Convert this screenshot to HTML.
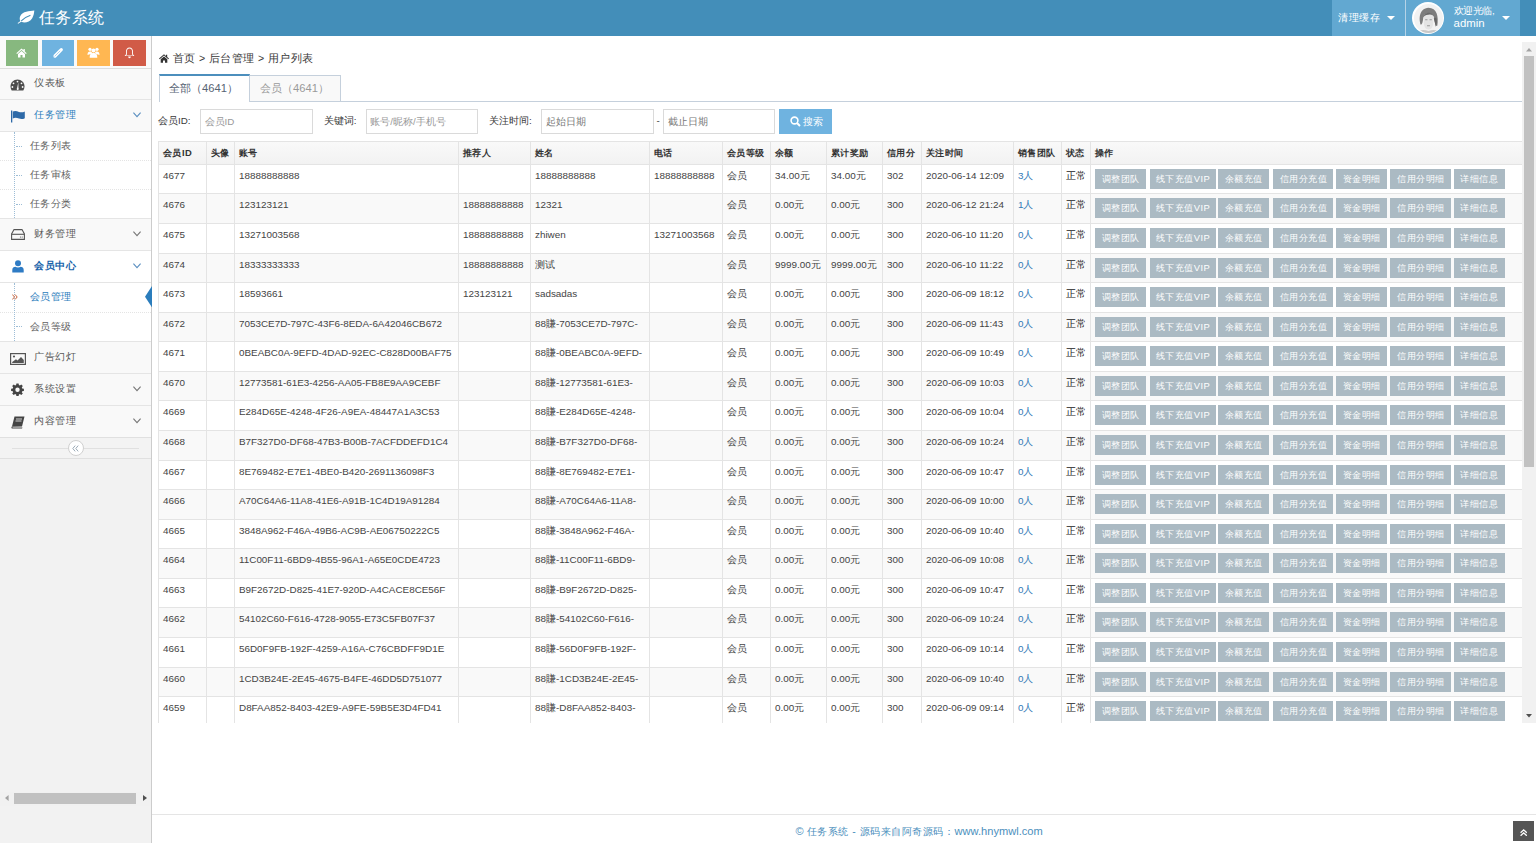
<!DOCTYPE html>
<html><head><meta charset="utf-8"><title>任务系统</title>
<style>
*{box-sizing:border-box;margin:0;padding:0}
html,body{width:1536px;height:843px;overflow:hidden;background:#fff;font-family:"Liberation Sans",sans-serif;color:#393939}
.a{position:absolute}
#hdr{position:absolute;left:0;top:0;width:1536px;height:36px;background:#438eb9}
.brand{position:absolute;left:39px;top:7px;font-size:16.4px;letter-spacing:0.4px;line-height:20px;color:#fff;white-space:nowrap}
.navli{position:absolute;top:0;height:36px;background:#62a8d1}
.wt{position:absolute;color:#fff;white-space:nowrap}
.caret{position:absolute;width:0;height:0;border-left:4.2px solid transparent;border-right:4.2px solid transparent;border-top:4.6px solid #fff}
#side{position:absolute;left:0;top:36px;width:152px;height:807px;background:#f2f2f2;border-right:1px solid #cccccc}
.sc{position:absolute;top:4px;height:25.8px;width:32.4px}
.mi{position:absolute;left:0;width:151px;background:#f9f9f9;border-top:1px solid #e5e5e5}
.mi .t{position:absolute;left:34.6px;font-size:10.4px;line-height:12px;color:#585858;white-space:nowrap}
.sub{position:absolute;left:0;width:151px;background:#fff;border-top:1px solid #e5e5e5}
.si{position:absolute;left:0;width:151px}
.si .t{position:absolute;left:30px;font-size:10.4px;line-height:12px;color:#616161;white-space:nowrap}
.si .dash{position:absolute;left:15px;width:6px;border-top:1px dotted #9dbdd6}
.chev{position:absolute;left:133px;width:8px;height:6px}
.bg{position:absolute;left:0;width:151px}
.ln{position:absolute;left:0;width:151px;height:1px;background:#e5e5e5}
.dl{position:absolute;left:0;width:151px;border-top:1px dotted #e4e4e4}
.dash{position:absolute;left:16px;width:6px;border-top:1px dotted #9dbdd6}
.mt{position:absolute;left:34px;font-size:10.4px;letter-spacing:0.7px;line-height:12px;color:#585858;white-space:nowrap}
.st{position:absolute;left:29.8px;font-size:10.4px;letter-spacing:0.5px;line-height:12px;color:#616161;white-space:nowrap}
.hl{position:absolute;height:1px;background:#e4e4e4}
.vl{position:absolute;width:1px;background:#e4e4e4}
.thead{position:absolute;background:linear-gradient(#f9f9f9,#f2f2f2)}
.tr{position:absolute}
.th{position:absolute;font-size:9.4px;letter-spacing:0.45px;line-height:12px;font-weight:bold;color:#333;white-space:nowrap}
.td{position:absolute;font-size:9.9px;line-height:12px;color:#444;white-space:nowrap}
.td.blue{color:#337ab7}
.td.dark{color:#222}
.btn{position:absolute;height:20.4px;background:#abbac3;color:#fff;font-size:9.4px;letter-spacing:0.5px;text-indent:0.5px;line-height:20.6px;text-align:center;white-space:nowrap}
.inp{position:absolute;top:109px;height:24.5px;border:1px solid #dadada;background:#fff}
.inp span{position:absolute;left:3.5px;top:5.5px;font-size:9.8px;line-height:12px;color:#999;white-space:nowrap}
.lbl{position:absolute;top:115px;font-size:9.8px;line-height:12px;color:#393939;white-space:nowrap}
</style></head>
<body>
<div id="hdr">
  <svg class="a" style="left:17px;top:9.5px" width="18" height="14" viewBox="0 0 18 14"><path d="M17.3 0.6C12.5 1.4 5.5 1.2 3.2 6.2 2.5 7.8 2.6 9.6 3.4 11 2.4 11.8 1.3 12.6 0.6 13.1 0.9 13.6 1.2 13.8 1.6 13.6 2.5 13 3.5 12.3 4.4 11.8 7.5 13.6 12.6 12.2 15.2 8.2 16.6 6 17.1 3.2 17.3 0.6Z" fill="#fff"/><path d="M4.6 10.6C7 8 9.8 6.4 13 5.4" fill="none" stroke="#438eb9" stroke-width="1.1" stroke-linecap="round"/></svg>
  <div class="brand">任务系统</div>
  <div class="navli" style="left:1332px;width:73.4px"></div>
  <div class="a" style="left:1405px;top:0;width:1px;height:36px;background:#b5d3e7"></div>
  <div class="navli" style="left:1406.4px;width:113.6px"></div>
  <div class="wt" style="left:1338px;top:11.6px;font-size:10.2px;line-height:12px;letter-spacing:0.5px">清理缓存</div>
  <div class="caret" style="left:1386.8px;top:15.8px"></div>
  <div class="a" style="left:1412px;top:2px;width:32.4px;height:32.4px;border-radius:50%;background:#fff"></div>
  <svg class="a" style="left:1413.5px;top:3.5px" width="29" height="29" viewBox="0 0 28 28"><defs><clipPath id="cp"><circle cx="14" cy="14" r="14"/></clipPath></defs><g clip-path="url(#cp)"><rect width="28" height="28" fill="#f2f2f2"/><path d="M6.5 20C4.5 14 5 4 14 3.5 22 3.5 24 12 22.5 21 21 22 20 18 19 12 17 10 11 10 9 13 8.5 17 8 20 6.5 20Z" fill="#7d7d7d"/><path d="M9.5 11.5C11 8 17 8 18.5 11.5V18C18.5 22 16.5 24.5 14 24.5S9.5 22 9.5 18Z" fill="#e4e4e4"/><path d="M10.8 15.2H13M15 15.2H17.2M12.6 21H15.4" stroke="#8a8a8a" stroke-width="0.8"/><path d="M9 12.5C11 7 17 8 18.5 11 16 9.5 12 10 9 12.5Z" fill="#6a6a6a"/><path d="M19 14C20 16 20.5 20 21 22 22 20 22.5 16 21.5 13Z" fill="#666"/><path d="M3 28C5 25 9 24.5 14 26 19 24.5 23 25 25 28Z" fill="#c8c8c8"/></g></svg>
  <div class="wt" style="left:1453.6px;top:4.5px;font-size:9.8px;line-height:12px;letter-spacing:-0.4px">欢迎光临,</div>
  <div class="wt" style="left:1453.6px;top:16.5px;font-size:11.4px;line-height:13px">admin</div>
  <div class="caret" style="left:1501.7px;top:15.8px"></div>
</div>

<div id="side">
  <div class="a" style="left:0;top:0;width:151px;height:32px;background:#fafafa"></div>
  <div class="ln" style="top:32px;background:#dddddd"></div>
  <div class="sc" style="left:5.8px;background:#87b87f"><svg class="a" style="left:10.5px;top:7.5px" width="11" height="10" viewBox="0 0 11 10"><path d="M5.5 0.5L0.3 5.2 1.1 5.9 5.5 2 9.9 5.9 10.7 5.2 8.8 3.5V1H7.5V2.3ZM2 6V9.6H4.5V7H6.5V9.6H9V6L5.5 3Z" fill="#fff"/></svg></div>
  <div class="sc" style="left:41.9px;width:32.1px;background:#6fb3e0"><svg class="a" style="left:10.5px;top:6.5px" width="12" height="12" viewBox="0 0 12 12"><path d="M3 9L9.3 2.7" stroke="#fff" stroke-width="3.2" stroke-linecap="round"/><path d="M1.6 10.4L2.4 8.4 3.6 9.6Z" fill="#fff"/><path d="M2.6 9.4L8.2 3.8" stroke="#6fb3e0" stroke-width="0.6"/></svg></div>
  <div class="sc" style="left:77px;width:32.7px;background:#ffb752"><svg class="a" style="left:9.5px;top:6.5px" width="13" height="11" viewBox="0 0 13 11"><circle cx="3" cy="2.3" r="1.6" fill="#fff"/><circle cx="10" cy="2.3" r="1.6" fill="#fff"/><circle cx="6.5" cy="3.5" r="2" fill="#fff"/><path d="M0.5 8C0.5 5 1.5 4.5 3 4.5S5 5 5 6.5ZM12.5 8C12.5 5 11.5 4.5 10 4.5S8 5 8 6.5ZM2.7 10.8C2.7 7 4 6 6.5 6S10.3 7 10.3 10.8Z" fill="#fff"/></svg></div>
  <div class="sc" style="left:113px;width:32.7px;background:#d15b47"><svg class="a" style="left:11px;top:6.5px" width="11" height="12" viewBox="0 0 11 12"><path d="M5.5 0.6C3.2 0.6 2 2.3 2 4.6V7.2L0.6 9H10.4L9 7.2V4.6C9 2.3 7.8 0.6 5.5 0.6ZM1.9 8.4L2.9 7.4V4.6C2.9 2.6 4 1.5 5.5 1.5S8.1 2.6 8.1 4.6V7.4L9.1 8.4Z" fill="#fff" fill-rule="evenodd"/><path d="M4.2 9.6C4.2 10.5 4.8 11.2 5.5 11.2S6.8 10.5 6.8 9.6Z" fill="#fff"/></svg></div>

  <!-- menu backgrounds -->
  <div class="bg" style="top:33px;height:30px;background:#f9f9f9"></div>
  <div class="bg" style="top:64px;height:31px;background:#f9f9f9"></div>
  <div class="bg" style="top:96px;height:86px;background:#fff"></div>
  <div class="bg" style="top:183px;height:31px;background:#f9f9f9"></div>
  <div class="bg" style="top:215px;height:31px;background:#fff"></div>
  <div class="bg" style="top:247px;height:58px;background:#fff"></div>
  <div class="bg" style="top:306px;height:31px;background:#f9f9f9"></div>
  <div class="bg" style="top:338px;height:31px;background:#f9f9f9"></div>
  <div class="bg" style="top:370px;height:31px;background:#f9f9f9"></div>
  <div class="bg" style="top:402px;height:20px;background:#f3f3f3"></div>
  <!-- lines -->
  <div class="ln" style="top:63px"></div>
  <div class="ln" style="top:95px"></div>
  <div class="dl" style="top:124px"></div>
  <div class="dl" style="top:153px"></div>
  <div class="ln" style="top:182px"></div>
  <div class="ln" style="top:214px"></div>
  <div class="ln" style="top:246px"></div>
  <div class="dl" style="top:276px"></div>
  <div class="ln" style="top:305px"></div>
  <div class="ln" style="top:337px"></div>
  <div class="ln" style="top:369px"></div>
  <div class="ln" style="top:401px;background:#e0e0e0"></div>
  <div class="ln" style="top:422px;background:#e0e0e0"></div>
  <!-- submenu vertical dotted -->
  <div class="a" style="left:14px;top:96px;height:86px;border-left:1px dotted #9dbdd6"></div>
  <div class="a" style="left:14px;top:247px;height:58px;border-left:1px dotted #9dbdd6"></div>
  <div class="dash" style="top:110px"></div>
  <div class="dash" style="top:139px"></div>
  <div class="dash" style="top:168px"></div>
  <div class="dash" style="top:290px"></div>

  <!-- icons + text -->
  <svg class="a" style="left:10px;top:43px" width="15" height="12" viewBox="0 0 15 12"><path d="M7.5 0.5C3.6 0.5 0.5 3.6 0.5 7.5 0.5 9 0.9 10.3 1.7 11.5H13.3C14.1 10.3 14.5 9 14.5 7.5 14.5 3.6 11.4 0.5 7.5 0.5Z" fill="#4d4d4d"/><circle cx="7.5" cy="2.6" r="0.9" fill="#f9f9f9"/><circle cx="3.5" cy="4.3" r="0.9" fill="#f9f9f9"/><circle cx="11.5" cy="4.3" r="0.9" fill="#f9f9f9"/><circle cx="2.4" cy="8" r="0.9" fill="#f9f9f9"/><circle cx="12.6" cy="8" r="0.9" fill="#f9f9f9"/><path d="M8.3 3.5L8.5 9.2C8.9 9.5 9 10 8.7 10.5 8.3 11 7.6 11.1 7.1 10.7 6.6 10.3 6.6 9.6 7 9.2Z" fill="#f9f9f9"/></svg>
  <div class="mt" style="top:41.0px">仪表板</div>

  <svg class="a" style="left:10.8px;top:74px" width="14" height="13" viewBox="0 0 14 13"><rect x="0" y="0.5" width="1.3" height="12" fill="#2e6aa8"/><path d="M1.8 1.6C4 0.4 6 1.2 8 2 10 2.6 12 2.4 13.8 1.4V8.2C12 9.2 10 9.4 8 8.6 6 7.8 4 7.4 1.8 8.4Z" fill="#2e6aa8"/></svg>
  <div class="mt" style="top:73.0px;color:#2b7dbc">任务管理</div>
  <svg class="chev" style="top:76.4px" viewBox="0 0 8 6"><path d="M0.4 0.6L4 4.6 7.6 0.6" fill="none" stroke="#5a8fc0" stroke-width="1.1"/></svg>

  <div class="st" style="top:104.3px">任务列表</div>
  <div class="st" style="top:133.3px">任务审核</div>
  <div class="st" style="top:162.3px">任务分类</div>

  <svg class="a" style="left:10.8px;top:193px" width="14" height="11" viewBox="0 0 14 11"><path d="M3 0.6H11L13.4 5V10.4H0.6V5Z" fill="none" stroke="#555" stroke-width="1.1"/><path d="M0.6 5.3H13.4" stroke="#555" stroke-width="1.1"/><circle cx="9.5" cy="8" r="0.6" fill="#555"/><circle cx="11.2" cy="8" r="0.6" fill="#555"/></svg>
  <div class="mt" style="top:192.0px">财务管理</div>
  <svg class="chev" style="top:195.4px" viewBox="0 0 8 6"><path d="M0.4 0.6L4 4.6 7.6 0.6" fill="none" stroke="#777" stroke-width="1.1"/></svg>

  <svg class="a" style="left:12px;top:224px" width="12" height="13" viewBox="0 0 12 13"><circle cx="6" cy="3.3" r="3" fill="#2e7bc4"/><path d="M0.3 12.4V10C0.3 7.8 1.8 6.7 3.4 6.7 4 7.2 5 7.5 6 7.5S8 7.2 8.6 6.7C10.2 6.7 11.7 7.8 11.7 10V12.4Z" fill="#2e7bc4"/></svg>
  <div class="mt" style="top:224.0px;color:#1963aa;font-weight:bold">会员中心</div>
  <svg class="chev" style="top:227.4px" viewBox="0 0 8 6"><path d="M0.4 0.6L4 4.6 7.6 0.6" fill="none" stroke="#5a8fc0" stroke-width="1.1"/></svg>

  <svg class="a" style="left:12px;top:258px" width="6" height="6" viewBox="0 0 6 6"><path d="M0.3 0.5L2.5 3 0.3 5.5M3 0.5L5.2 3 3 5.5" fill="none" stroke="#c86139" stroke-width="1"/></svg>
  <div class="st" style="top:255.3px;color:#2b7dbc">会员管理</div>
  <svg class="a" style="left:145px;top:250px" width="7" height="21.4" viewBox="0 0 7 21.4"><path d="M7 0L0 10.7 7 21.4Z" fill="#2b7dbc"/></svg>
  <div class="st" style="top:285.3px">会员等级</div>

  <svg class="a" style="left:9.5px;top:317px" width="16" height="12" viewBox="0 0 16 12"><rect x="0.6" y="0.6" width="14.8" height="10.8" fill="none" stroke="#555" stroke-width="1.2"/><circle cx="4" cy="3.5" r="1.1" fill="#555"/><path d="M2.2 10H13.8V7L11 4 7.5 7.5 6 6.2 2.2 9Z" fill="#555"/></svg>
  <div class="mt" style="top:315.0px">广告幻灯</div>

  <svg class="a" style="left:11.3px;top:347px" width="13" height="13" viewBox="0 0 13 13"><path d="M5.4 0.4H7.6L7.9 2.1 8.9 2.5 10.3 1.5 11.8 3 10.8 4.4 11.2 5.4 12.9 5.7V7.9L11.2 8.2 10.8 9.2 11.8 10.6 10.3 12.1 8.9 11.1 7.9 11.5 7.6 13.2H5.4L5.1 11.5 4.1 11.1 2.7 12.1 1.2 10.6 2.2 9.2 1.8 8.2 0.1 7.9V5.7L1.8 5.4 2.2 4.4 1.2 3 2.7 1.5 4.1 2.5 5.1 2.1ZM6.5 4.6A2.2 2.2 0 1 0 6.5 9 2.2 2.2 0 1 0 6.5 4.6Z" fill="#444" fill-rule="evenodd"/></svg>
  <div class="mt" style="top:347.0px">系统设置</div>
  <svg class="chev" style="top:350.4px" viewBox="0 0 8 6"><path d="M0.4 0.6L4 4.6 7.6 0.6" fill="none" stroke="#777" stroke-width="1.1"/></svg>

  <svg class="a" style="left:10.8px;top:380px" width="14" height="13" viewBox="0 0 14 13"><path d="M3.5 0.5H13.5L11 10.5H1Z" fill="#444"/><path d="M1 10.5C0.3 10.5 0.2 12.5 1 12.5H11L11.5 11.5H1.8C1.3 11.5 1.3 10.9 1.8 10.9H11Z" fill="#444"/><path d="M5 3H11M4.5 5H10.5" stroke="#f9f9f9" stroke-width="0.8"/></svg>
  <div class="mt" style="top:379.0px">内容管理</div>
  <svg class="chev" style="top:382.4px" viewBox="0 0 8 6"><path d="M0.4 0.6L4 4.6 7.6 0.6" fill="none" stroke="#777" stroke-width="1.1"/></svg>

  <!-- toggler -->
  <div class="a" style="left:12px;top:412px;width:127px;height:1px;background:#e0e0e0"></div>
  <div class="a" style="left:68px;top:404px;width:16px;height:16px;border-radius:50%;background:#fff;border:1.3px solid #d0d0d0"></div>
  <svg class="a" style="left:72.3px;top:408.6px" width="7" height="7" viewBox="0 0 7 7"><path d="M3.2 0.6L0.8 3.5 3.2 6.4M6.2 0.6L3.8 3.5 6.2 6.4" fill="none" stroke="#9aa9b6" stroke-width="1"/></svg>
  <!-- h scrollbar -->
  <div class="a" style="left:0;top:756px;width:151px;height:13.5px;background:#f1f1f1"></div>
  <div class="a" style="left:13.5px;top:757.3px;width:122.5px;height:10.4px;background:#c1c1c1"></div>
  <svg class="a" style="left:4.5px;top:759.3px" width="4" height="6" viewBox="0 0 4 6"><path d="M3.6 0L0 3 3.6 6Z" fill="#a3a3a3"/></svg>
  <svg class="a" style="left:142.7px;top:759.3px" width="4" height="6" viewBox="0 0 4 6"><path d="M0 0L4 3 0 6Z" fill="#505050"/></svg>
</div>

<!-- main -->
<svg class="a" style="left:158.5px;top:54px" width="10" height="9" viewBox="0 0 10 9"><path d="M5 0.2L0 4.6 0.7 5.3 5 1.6 9.3 5.3 10 4.6 8.2 3V0.8H7V1.9ZM1.7 5.2V8.8H4V6.5H6V8.8H8.3V5.2L5 2.4Z" fill="#333"/></svg>
<div class="a" style="left:172.6px;top:51.5px;font-size:10.6px;line-height:13px;color:#393939;white-space:nowrap;letter-spacing:0.25px;word-spacing:0.6px">首页 &gt; 后台管理 &gt; 用户列表</div>

<!-- tabs -->
<div class="a" style="left:158.5px;top:101px;width:1363.5px;height:1px;background:#c5d0dc"></div>
<div class="a" style="left:250px;top:75px;width:91.4px;height:26.8px;background:#f9f9f9;border:1px solid #c5d0dc;border-left:none"></div>
<div class="a" style="left:158.5px;top:74px;width:91.5px;height:28px;background:#fff;border-left:1px solid #c5d0dc;border-right:1px solid #c5d0dc;border-top:2px solid #4c8fbd"></div>
<div class="a" style="left:169px;top:82.1px;font-size:11.2px;line-height:13px;color:#576373;white-space:nowrap">全部（4641）</div>
<div class="a" style="left:260px;top:82.1px;font-size:11.2px;line-height:13px;color:#999;white-space:nowrap">会员（4641）</div>

<!-- search -->
<div class="lbl" style="left:158px">会员ID:</div>
<div class="inp" style="left:200px;width:112.8px"><span>会员ID</span></div>
<div class="lbl" style="left:323.8px">关键词:</div>
<div class="inp" style="left:365.7px;width:112.8px"><span>账号/昵称/手机号</span></div>
<div class="lbl" style="left:489px">关注时间:</div>
<div class="inp" style="left:541px;width:112.5px"><span style="color:#777">起始日期</span></div>
<div class="lbl" style="left:656.5px">-</div>
<div class="inp" style="left:663.3px;width:112.1px"><span style="color:#777">截止日期</span></div>
<div class="a" style="left:779.4px;top:109px;width:52.3px;height:24.5px;background:#6fb3e0">
  <svg class="a" style="left:10.5px;top:6.5px" width="11" height="11" viewBox="0 0 11 11"><circle cx="4.5" cy="4.5" r="3.4" fill="none" stroke="#fff" stroke-width="1.6"/><path d="M7 7L10 10" stroke="#fff" stroke-width="2"/></svg>
  <div class="wt" style="left:23.5px;top:5.8px;font-size:10.4px;line-height:13px;letter-spacing:0.5px">搜索</div>
</div>

<div class="a" style="left:0;top:0;width:1536px;height:723px;overflow:hidden"><div class="thead" style="left:158px;top:141.5px;width:1364px;height:22.5px"></div>
<div class="th" style="left:163px;top:147px">会员ID</div>
<div class="th" style="left:211px;top:147px">头像</div>
<div class="th" style="left:239px;top:147px">账号</div>
<div class="th" style="left:463px;top:147px">推荐人</div>
<div class="th" style="left:535px;top:147px">姓名</div>
<div class="th" style="left:654px;top:147px">电话</div>
<div class="th" style="left:727px;top:147px">会员等级</div>
<div class="th" style="left:775px;top:147px">余额</div>
<div class="th" style="left:831px;top:147px">累计奖励</div>
<div class="th" style="left:887px;top:147px">信用分</div>
<div class="th" style="left:926px;top:147px">关注时间</div>
<div class="th" style="left:1018px;top:147px">销售团队</div>
<div class="th" style="left:1066px;top:147px">状态</div>
<div class="th" style="left:1095px;top:147px">操作</div>
<div class="tr" style="left:158px;top:164px;width:1364px;height:29px;background:#fff"></div>
<div class="td" style="left:163px;top:170px">4677</div>
<div class="td" style="left:239px;top:170px">18888888888</div>
<div class="td" style="left:535px;top:170px">18888888888</div>
<div class="td" style="left:654px;top:170px">18888888888</div>
<div class="td" style="left:727px;top:170px">会员</div>
<div class="td" style="left:775px;top:170px">34.00元</div>
<div class="td" style="left:831px;top:170px">34.00元</div>
<div class="td" style="left:887px;top:170px">302</div>
<div class="td" style="left:926px;top:170px">2020-06-14 12:09</div>
<div class="td blue" style="left:1018px;top:170px">3人</div>
<div class="td dark" style="left:1066px;top:170px">正常</div>
<div class="btn" style="left:1095.0px;top:169px;width:51.0px">调整团队</div>
<div class="btn" style="left:1149.8px;top:169px;width:65.90000000000009px">线下充值VIP</div>
<div class="btn" style="left:1218.4px;top:169px;width:50.69999999999982px">余额充值</div>
<div class="btn" style="left:1273.0px;top:169px;width:60.299999999999955px">信用分充值</div>
<div class="btn" style="left:1336.0px;top:169px;width:50.700000000000045px">资金明细</div>
<div class="btn" style="left:1390.3px;top:169px;width:60.799999999999955px">信用分明细</div>
<div class="btn" style="left:1453.5px;top:169px;width:51.09999999999991px">详细信息</div>
<div class="tr" style="left:158px;top:193px;width:1364px;height:30px;background:#f9f9f9"></div>
<div class="td" style="left:163px;top:199px">4676</div>
<div class="td" style="left:239px;top:199px">123123121</div>
<div class="td" style="left:463px;top:199px">18888888888</div>
<div class="td" style="left:535px;top:199px">12321</div>
<div class="td" style="left:727px;top:199px">会员</div>
<div class="td" style="left:775px;top:199px">0.00元</div>
<div class="td" style="left:831px;top:199px">0.00元</div>
<div class="td" style="left:887px;top:199px">300</div>
<div class="td" style="left:926px;top:199px">2020-06-12 21:24</div>
<div class="td blue" style="left:1018px;top:199px">1人</div>
<div class="td dark" style="left:1066px;top:199px">正常</div>
<div class="btn" style="left:1095.0px;top:198px;width:51.0px">调整团队</div>
<div class="btn" style="left:1149.8px;top:198px;width:65.90000000000009px">线下充值VIP</div>
<div class="btn" style="left:1218.4px;top:198px;width:50.69999999999982px">余额充值</div>
<div class="btn" style="left:1273.0px;top:198px;width:60.299999999999955px">信用分充值</div>
<div class="btn" style="left:1336.0px;top:198px;width:50.700000000000045px">资金明细</div>
<div class="btn" style="left:1390.3px;top:198px;width:60.799999999999955px">信用分明细</div>
<div class="btn" style="left:1453.5px;top:198px;width:51.09999999999991px">详细信息</div>
<div class="tr" style="left:158px;top:223px;width:1364px;height:30px;background:#fff"></div>
<div class="td" style="left:163px;top:229px">4675</div>
<div class="td" style="left:239px;top:229px">13271003568</div>
<div class="td" style="left:463px;top:229px">18888888888</div>
<div class="td" style="left:535px;top:229px">zhiwen</div>
<div class="td" style="left:654px;top:229px">13271003568</div>
<div class="td" style="left:727px;top:229px">会员</div>
<div class="td" style="left:775px;top:229px">0.00元</div>
<div class="td" style="left:831px;top:229px">0.00元</div>
<div class="td" style="left:887px;top:229px">300</div>
<div class="td" style="left:926px;top:229px">2020-06-10 11:20</div>
<div class="td blue" style="left:1018px;top:229px">0人</div>
<div class="td dark" style="left:1066px;top:229px">正常</div>
<div class="btn" style="left:1095.0px;top:228px;width:51.0px">调整团队</div>
<div class="btn" style="left:1149.8px;top:228px;width:65.90000000000009px">线下充值VIP</div>
<div class="btn" style="left:1218.4px;top:228px;width:50.69999999999982px">余额充值</div>
<div class="btn" style="left:1273.0px;top:228px;width:60.299999999999955px">信用分充值</div>
<div class="btn" style="left:1336.0px;top:228px;width:50.700000000000045px">资金明细</div>
<div class="btn" style="left:1390.3px;top:228px;width:60.799999999999955px">信用分明细</div>
<div class="btn" style="left:1453.5px;top:228px;width:51.09999999999991px">详细信息</div>
<div class="tr" style="left:158px;top:253px;width:1364px;height:29px;background:#f9f9f9"></div>
<div class="td" style="left:163px;top:259px">4674</div>
<div class="td" style="left:239px;top:259px">18333333333</div>
<div class="td" style="left:463px;top:259px">18888888888</div>
<div class="td" style="left:535px;top:259px">测试</div>
<div class="td" style="left:727px;top:259px">会员</div>
<div class="td" style="left:775px;top:259px">9999.00元</div>
<div class="td" style="left:831px;top:259px">9999.00元</div>
<div class="td" style="left:887px;top:259px">300</div>
<div class="td" style="left:926px;top:259px">2020-06-10 11:22</div>
<div class="td blue" style="left:1018px;top:259px">0人</div>
<div class="td dark" style="left:1066px;top:259px">正常</div>
<div class="btn" style="left:1095.0px;top:258px;width:51.0px">调整团队</div>
<div class="btn" style="left:1149.8px;top:258px;width:65.90000000000009px">线下充值VIP</div>
<div class="btn" style="left:1218.4px;top:258px;width:50.69999999999982px">余额充值</div>
<div class="btn" style="left:1273.0px;top:258px;width:60.299999999999955px">信用分充值</div>
<div class="btn" style="left:1336.0px;top:258px;width:50.700000000000045px">资金明细</div>
<div class="btn" style="left:1390.3px;top:258px;width:60.799999999999955px">信用分明细</div>
<div class="btn" style="left:1453.5px;top:258px;width:51.09999999999991px">详细信息</div>
<div class="tr" style="left:158px;top:282px;width:1364px;height:30px;background:#fff"></div>
<div class="td" style="left:163px;top:288px">4673</div>
<div class="td" style="left:239px;top:288px">18593661</div>
<div class="td" style="left:463px;top:288px">123123121</div>
<div class="td" style="left:535px;top:288px">sadsadas</div>
<div class="td" style="left:727px;top:288px">会员</div>
<div class="td" style="left:775px;top:288px">0.00元</div>
<div class="td" style="left:831px;top:288px">0.00元</div>
<div class="td" style="left:887px;top:288px">300</div>
<div class="td" style="left:926px;top:288px">2020-06-09 18:12</div>
<div class="td blue" style="left:1018px;top:288px">0人</div>
<div class="td dark" style="left:1066px;top:288px">正常</div>
<div class="btn" style="left:1095.0px;top:287px;width:51.0px">调整团队</div>
<div class="btn" style="left:1149.8px;top:287px;width:65.90000000000009px">线下充值VIP</div>
<div class="btn" style="left:1218.4px;top:287px;width:50.69999999999982px">余额充值</div>
<div class="btn" style="left:1273.0px;top:287px;width:60.299999999999955px">信用分充值</div>
<div class="btn" style="left:1336.0px;top:287px;width:50.700000000000045px">资金明细</div>
<div class="btn" style="left:1390.3px;top:287px;width:60.799999999999955px">信用分明细</div>
<div class="btn" style="left:1453.5px;top:287px;width:51.09999999999991px">详细信息</div>
<div class="tr" style="left:158px;top:312px;width:1364px;height:29px;background:#f9f9f9"></div>
<div class="td" style="left:163px;top:318px">4672</div>
<div class="td" style="left:239px;top:318px">7053CE7D-797C-43F6-8EDA-6A42046CB672</div>
<div class="td" style="left:535px;top:318px">88賺-7053CE7D-797C-</div>
<div class="td" style="left:727px;top:318px">会员</div>
<div class="td" style="left:775px;top:318px">0.00元</div>
<div class="td" style="left:831px;top:318px">0.00元</div>
<div class="td" style="left:887px;top:318px">300</div>
<div class="td" style="left:926px;top:318px">2020-06-09 11:43</div>
<div class="td blue" style="left:1018px;top:318px">0人</div>
<div class="td dark" style="left:1066px;top:318px">正常</div>
<div class="btn" style="left:1095.0px;top:317px;width:51.0px">调整团队</div>
<div class="btn" style="left:1149.8px;top:317px;width:65.90000000000009px">线下充值VIP</div>
<div class="btn" style="left:1218.4px;top:317px;width:50.69999999999982px">余额充值</div>
<div class="btn" style="left:1273.0px;top:317px;width:60.299999999999955px">信用分充值</div>
<div class="btn" style="left:1336.0px;top:317px;width:50.700000000000045px">资金明细</div>
<div class="btn" style="left:1390.3px;top:317px;width:60.799999999999955px">信用分明细</div>
<div class="btn" style="left:1453.5px;top:317px;width:51.09999999999991px">详细信息</div>
<div class="tr" style="left:158px;top:341px;width:1364px;height:30px;background:#fff"></div>
<div class="td" style="left:163px;top:347px">4671</div>
<div class="td" style="left:239px;top:347px">0BEABC0A-9EFD-4DAD-92EC-C828D00BAF75</div>
<div class="td" style="left:535px;top:347px">88賺-0BEABC0A-9EFD-</div>
<div class="td" style="left:727px;top:347px">会员</div>
<div class="td" style="left:775px;top:347px">0.00元</div>
<div class="td" style="left:831px;top:347px">0.00元</div>
<div class="td" style="left:887px;top:347px">300</div>
<div class="td" style="left:926px;top:347px">2020-06-09 10:49</div>
<div class="td blue" style="left:1018px;top:347px">0人</div>
<div class="td dark" style="left:1066px;top:347px">正常</div>
<div class="btn" style="left:1095.0px;top:346px;width:51.0px">调整团队</div>
<div class="btn" style="left:1149.8px;top:346px;width:65.90000000000009px">线下充值VIP</div>
<div class="btn" style="left:1218.4px;top:346px;width:50.69999999999982px">余额充值</div>
<div class="btn" style="left:1273.0px;top:346px;width:60.299999999999955px">信用分充值</div>
<div class="btn" style="left:1336.0px;top:346px;width:50.700000000000045px">资金明细</div>
<div class="btn" style="left:1390.3px;top:346px;width:60.799999999999955px">信用分明细</div>
<div class="btn" style="left:1453.5px;top:346px;width:51.09999999999991px">详细信息</div>
<div class="tr" style="left:158px;top:371px;width:1364px;height:29px;background:#f9f9f9"></div>
<div class="td" style="left:163px;top:377px">4670</div>
<div class="td" style="left:239px;top:377px">12773581-61E3-4256-AA05-FB8E9AA9CEBF</div>
<div class="td" style="left:535px;top:377px">88賺-12773581-61E3-</div>
<div class="td" style="left:727px;top:377px">会员</div>
<div class="td" style="left:775px;top:377px">0.00元</div>
<div class="td" style="left:831px;top:377px">0.00元</div>
<div class="td" style="left:887px;top:377px">300</div>
<div class="td" style="left:926px;top:377px">2020-06-09 10:03</div>
<div class="td blue" style="left:1018px;top:377px">0人</div>
<div class="td dark" style="left:1066px;top:377px">正常</div>
<div class="btn" style="left:1095.0px;top:376px;width:51.0px">调整团队</div>
<div class="btn" style="left:1149.8px;top:376px;width:65.90000000000009px">线下充值VIP</div>
<div class="btn" style="left:1218.4px;top:376px;width:50.69999999999982px">余额充值</div>
<div class="btn" style="left:1273.0px;top:376px;width:60.299999999999955px">信用分充值</div>
<div class="btn" style="left:1336.0px;top:376px;width:50.700000000000045px">资金明细</div>
<div class="btn" style="left:1390.3px;top:376px;width:60.799999999999955px">信用分明细</div>
<div class="btn" style="left:1453.5px;top:376px;width:51.09999999999991px">详细信息</div>
<div class="tr" style="left:158px;top:400px;width:1364px;height:30px;background:#fff"></div>
<div class="td" style="left:163px;top:406px">4669</div>
<div class="td" style="left:239px;top:406px">E284D65E-4248-4F26-A9EA-48447A1A3C53</div>
<div class="td" style="left:535px;top:406px">88賺-E284D65E-4248-</div>
<div class="td" style="left:727px;top:406px">会员</div>
<div class="td" style="left:775px;top:406px">0.00元</div>
<div class="td" style="left:831px;top:406px">0.00元</div>
<div class="td" style="left:887px;top:406px">300</div>
<div class="td" style="left:926px;top:406px">2020-06-09 10:04</div>
<div class="td blue" style="left:1018px;top:406px">0人</div>
<div class="td dark" style="left:1066px;top:406px">正常</div>
<div class="btn" style="left:1095.0px;top:405px;width:51.0px">调整团队</div>
<div class="btn" style="left:1149.8px;top:405px;width:65.90000000000009px">线下充值VIP</div>
<div class="btn" style="left:1218.4px;top:405px;width:50.69999999999982px">余额充值</div>
<div class="btn" style="left:1273.0px;top:405px;width:60.299999999999955px">信用分充值</div>
<div class="btn" style="left:1336.0px;top:405px;width:50.700000000000045px">资金明细</div>
<div class="btn" style="left:1390.3px;top:405px;width:60.799999999999955px">信用分明细</div>
<div class="btn" style="left:1453.5px;top:405px;width:51.09999999999991px">详细信息</div>
<div class="tr" style="left:158px;top:430px;width:1364px;height:30px;background:#f9f9f9"></div>
<div class="td" style="left:163px;top:436px">4668</div>
<div class="td" style="left:239px;top:436px">B7F327D0-DF68-47B3-B00B-7ACFDDEFD1C4</div>
<div class="td" style="left:535px;top:436px">88賺-B7F327D0-DF68-</div>
<div class="td" style="left:727px;top:436px">会员</div>
<div class="td" style="left:775px;top:436px">0.00元</div>
<div class="td" style="left:831px;top:436px">0.00元</div>
<div class="td" style="left:887px;top:436px">300</div>
<div class="td" style="left:926px;top:436px">2020-06-09 10:24</div>
<div class="td blue" style="left:1018px;top:436px">0人</div>
<div class="td dark" style="left:1066px;top:436px">正常</div>
<div class="btn" style="left:1095.0px;top:435px;width:51.0px">调整团队</div>
<div class="btn" style="left:1149.8px;top:435px;width:65.90000000000009px">线下充值VIP</div>
<div class="btn" style="left:1218.4px;top:435px;width:50.69999999999982px">余额充值</div>
<div class="btn" style="left:1273.0px;top:435px;width:60.299999999999955px">信用分充值</div>
<div class="btn" style="left:1336.0px;top:435px;width:50.700000000000045px">资金明细</div>
<div class="btn" style="left:1390.3px;top:435px;width:60.799999999999955px">信用分明细</div>
<div class="btn" style="left:1453.5px;top:435px;width:51.09999999999991px">详细信息</div>
<div class="tr" style="left:158px;top:460px;width:1364px;height:29px;background:#fff"></div>
<div class="td" style="left:163px;top:466px">4667</div>
<div class="td" style="left:239px;top:466px">8E769482-E7E1-4BE0-B420-2691136098F3</div>
<div class="td" style="left:535px;top:466px">88賺-8E769482-E7E1-</div>
<div class="td" style="left:727px;top:466px">会员</div>
<div class="td" style="left:775px;top:466px">0.00元</div>
<div class="td" style="left:831px;top:466px">0.00元</div>
<div class="td" style="left:887px;top:466px">300</div>
<div class="td" style="left:926px;top:466px">2020-06-09 10:47</div>
<div class="td blue" style="left:1018px;top:466px">0人</div>
<div class="td dark" style="left:1066px;top:466px">正常</div>
<div class="btn" style="left:1095.0px;top:465px;width:51.0px">调整团队</div>
<div class="btn" style="left:1149.8px;top:465px;width:65.90000000000009px">线下充值VIP</div>
<div class="btn" style="left:1218.4px;top:465px;width:50.69999999999982px">余额充值</div>
<div class="btn" style="left:1273.0px;top:465px;width:60.299999999999955px">信用分充值</div>
<div class="btn" style="left:1336.0px;top:465px;width:50.700000000000045px">资金明细</div>
<div class="btn" style="left:1390.3px;top:465px;width:60.799999999999955px">信用分明细</div>
<div class="btn" style="left:1453.5px;top:465px;width:51.09999999999991px">详细信息</div>
<div class="tr" style="left:158px;top:489px;width:1364px;height:30px;background:#f9f9f9"></div>
<div class="td" style="left:163px;top:495px">4666</div>
<div class="td" style="left:239px;top:495px">A70C64A6-11A8-41E6-A91B-1C4D19A91284</div>
<div class="td" style="left:535px;top:495px">88賺-A70C64A6-11A8-</div>
<div class="td" style="left:727px;top:495px">会员</div>
<div class="td" style="left:775px;top:495px">0.00元</div>
<div class="td" style="left:831px;top:495px">0.00元</div>
<div class="td" style="left:887px;top:495px">300</div>
<div class="td" style="left:926px;top:495px">2020-06-09 10:00</div>
<div class="td blue" style="left:1018px;top:495px">0人</div>
<div class="td dark" style="left:1066px;top:495px">正常</div>
<div class="btn" style="left:1095.0px;top:494px;width:51.0px">调整团队</div>
<div class="btn" style="left:1149.8px;top:494px;width:65.90000000000009px">线下充值VIP</div>
<div class="btn" style="left:1218.4px;top:494px;width:50.69999999999982px">余额充值</div>
<div class="btn" style="left:1273.0px;top:494px;width:60.299999999999955px">信用分充值</div>
<div class="btn" style="left:1336.0px;top:494px;width:50.700000000000045px">资金明细</div>
<div class="btn" style="left:1390.3px;top:494px;width:60.799999999999955px">信用分明细</div>
<div class="btn" style="left:1453.5px;top:494px;width:51.09999999999991px">详细信息</div>
<div class="tr" style="left:158px;top:519px;width:1364px;height:29px;background:#fff"></div>
<div class="td" style="left:163px;top:525px">4665</div>
<div class="td" style="left:239px;top:525px">3848A962-F46A-49B6-AC9B-AE06750222C5</div>
<div class="td" style="left:535px;top:525px">88賺-3848A962-F46A-</div>
<div class="td" style="left:727px;top:525px">会员</div>
<div class="td" style="left:775px;top:525px">0.00元</div>
<div class="td" style="left:831px;top:525px">0.00元</div>
<div class="td" style="left:887px;top:525px">300</div>
<div class="td" style="left:926px;top:525px">2020-06-09 10:40</div>
<div class="td blue" style="left:1018px;top:525px">0人</div>
<div class="td dark" style="left:1066px;top:525px">正常</div>
<div class="btn" style="left:1095.0px;top:524px;width:51.0px">调整团队</div>
<div class="btn" style="left:1149.8px;top:524px;width:65.90000000000009px">线下充值VIP</div>
<div class="btn" style="left:1218.4px;top:524px;width:50.69999999999982px">余额充值</div>
<div class="btn" style="left:1273.0px;top:524px;width:60.299999999999955px">信用分充值</div>
<div class="btn" style="left:1336.0px;top:524px;width:50.700000000000045px">资金明细</div>
<div class="btn" style="left:1390.3px;top:524px;width:60.799999999999955px">信用分明细</div>
<div class="btn" style="left:1453.5px;top:524px;width:51.09999999999991px">详细信息</div>
<div class="tr" style="left:158px;top:548px;width:1364px;height:30px;background:#f9f9f9"></div>
<div class="td" style="left:163px;top:554px">4664</div>
<div class="td" style="left:239px;top:554px">11C00F11-6BD9-4B55-96A1-A65E0CDE4723</div>
<div class="td" style="left:535px;top:554px">88賺-11C00F11-6BD9-</div>
<div class="td" style="left:727px;top:554px">会员</div>
<div class="td" style="left:775px;top:554px">0.00元</div>
<div class="td" style="left:831px;top:554px">0.00元</div>
<div class="td" style="left:887px;top:554px">300</div>
<div class="td" style="left:926px;top:554px">2020-06-09 10:08</div>
<div class="td blue" style="left:1018px;top:554px">0人</div>
<div class="td dark" style="left:1066px;top:554px">正常</div>
<div class="btn" style="left:1095.0px;top:553px;width:51.0px">调整团队</div>
<div class="btn" style="left:1149.8px;top:553px;width:65.90000000000009px">线下充值VIP</div>
<div class="btn" style="left:1218.4px;top:553px;width:50.69999999999982px">余额充值</div>
<div class="btn" style="left:1273.0px;top:553px;width:60.299999999999955px">信用分充值</div>
<div class="btn" style="left:1336.0px;top:553px;width:50.700000000000045px">资金明细</div>
<div class="btn" style="left:1390.3px;top:553px;width:60.799999999999955px">信用分明细</div>
<div class="btn" style="left:1453.5px;top:553px;width:51.09999999999991px">详细信息</div>
<div class="tr" style="left:158px;top:578px;width:1364px;height:29px;background:#fff"></div>
<div class="td" style="left:163px;top:584px">4663</div>
<div class="td" style="left:239px;top:584px">B9F2672D-D825-41E7-920D-A4CACE8CE56F</div>
<div class="td" style="left:535px;top:584px">88賺-B9F2672D-D825-</div>
<div class="td" style="left:727px;top:584px">会员</div>
<div class="td" style="left:775px;top:584px">0.00元</div>
<div class="td" style="left:831px;top:584px">0.00元</div>
<div class="td" style="left:887px;top:584px">300</div>
<div class="td" style="left:926px;top:584px">2020-06-09 10:47</div>
<div class="td blue" style="left:1018px;top:584px">0人</div>
<div class="td dark" style="left:1066px;top:584px">正常</div>
<div class="btn" style="left:1095.0px;top:583px;width:51.0px">调整团队</div>
<div class="btn" style="left:1149.8px;top:583px;width:65.90000000000009px">线下充值VIP</div>
<div class="btn" style="left:1218.4px;top:583px;width:50.69999999999982px">余额充值</div>
<div class="btn" style="left:1273.0px;top:583px;width:60.299999999999955px">信用分充值</div>
<div class="btn" style="left:1336.0px;top:583px;width:50.700000000000045px">资金明细</div>
<div class="btn" style="left:1390.3px;top:583px;width:60.799999999999955px">信用分明细</div>
<div class="btn" style="left:1453.5px;top:583px;width:51.09999999999991px">详细信息</div>
<div class="tr" style="left:158px;top:607px;width:1364px;height:30px;background:#f9f9f9"></div>
<div class="td" style="left:163px;top:613px">4662</div>
<div class="td" style="left:239px;top:613px">54102C60-F616-4728-9055-E73C5FB07F37</div>
<div class="td" style="left:535px;top:613px">88賺-54102C60-F616-</div>
<div class="td" style="left:727px;top:613px">会员</div>
<div class="td" style="left:775px;top:613px">0.00元</div>
<div class="td" style="left:831px;top:613px">0.00元</div>
<div class="td" style="left:887px;top:613px">300</div>
<div class="td" style="left:926px;top:613px">2020-06-09 10:24</div>
<div class="td blue" style="left:1018px;top:613px">0人</div>
<div class="td dark" style="left:1066px;top:613px">正常</div>
<div class="btn" style="left:1095.0px;top:612px;width:51.0px">调整团队</div>
<div class="btn" style="left:1149.8px;top:612px;width:65.90000000000009px">线下充值VIP</div>
<div class="btn" style="left:1218.4px;top:612px;width:50.69999999999982px">余额充值</div>
<div class="btn" style="left:1273.0px;top:612px;width:60.299999999999955px">信用分充值</div>
<div class="btn" style="left:1336.0px;top:612px;width:50.700000000000045px">资金明细</div>
<div class="btn" style="left:1390.3px;top:612px;width:60.799999999999955px">信用分明细</div>
<div class="btn" style="left:1453.5px;top:612px;width:51.09999999999991px">详细信息</div>
<div class="tr" style="left:158px;top:637px;width:1364px;height:30px;background:#fff"></div>
<div class="td" style="left:163px;top:643px">4661</div>
<div class="td" style="left:239px;top:643px">56D0F9FB-192F-4259-A16A-C76CBDFF9D1E</div>
<div class="td" style="left:535px;top:643px">88賺-56D0F9FB-192F-</div>
<div class="td" style="left:727px;top:643px">会员</div>
<div class="td" style="left:775px;top:643px">0.00元</div>
<div class="td" style="left:831px;top:643px">0.00元</div>
<div class="td" style="left:887px;top:643px">300</div>
<div class="td" style="left:926px;top:643px">2020-06-09 10:14</div>
<div class="td blue" style="left:1018px;top:643px">0人</div>
<div class="td dark" style="left:1066px;top:643px">正常</div>
<div class="btn" style="left:1095.0px;top:642px;width:51.0px">调整团队</div>
<div class="btn" style="left:1149.8px;top:642px;width:65.90000000000009px">线下充值VIP</div>
<div class="btn" style="left:1218.4px;top:642px;width:50.69999999999982px">余额充值</div>
<div class="btn" style="left:1273.0px;top:642px;width:60.299999999999955px">信用分充值</div>
<div class="btn" style="left:1336.0px;top:642px;width:50.700000000000045px">资金明细</div>
<div class="btn" style="left:1390.3px;top:642px;width:60.799999999999955px">信用分明细</div>
<div class="btn" style="left:1453.5px;top:642px;width:51.09999999999991px">详细信息</div>
<div class="tr" style="left:158px;top:667px;width:1364px;height:29px;background:#f9f9f9"></div>
<div class="td" style="left:163px;top:673px">4660</div>
<div class="td" style="left:239px;top:673px">1CD3B24E-2E45-4675-B4FE-46DD5D751077</div>
<div class="td" style="left:535px;top:673px">88賺-1CD3B24E-2E45-</div>
<div class="td" style="left:727px;top:673px">会员</div>
<div class="td" style="left:775px;top:673px">0.00元</div>
<div class="td" style="left:831px;top:673px">0.00元</div>
<div class="td" style="left:887px;top:673px">300</div>
<div class="td" style="left:926px;top:673px">2020-06-09 10:40</div>
<div class="td blue" style="left:1018px;top:673px">0人</div>
<div class="td dark" style="left:1066px;top:673px">正常</div>
<div class="btn" style="left:1095.0px;top:672px;width:51.0px">调整团队</div>
<div class="btn" style="left:1149.8px;top:672px;width:65.90000000000009px">线下充值VIP</div>
<div class="btn" style="left:1218.4px;top:672px;width:50.69999999999982px">余额充值</div>
<div class="btn" style="left:1273.0px;top:672px;width:60.299999999999955px">信用分充值</div>
<div class="btn" style="left:1336.0px;top:672px;width:50.700000000000045px">资金明细</div>
<div class="btn" style="left:1390.3px;top:672px;width:60.799999999999955px">信用分明细</div>
<div class="btn" style="left:1453.5px;top:672px;width:51.09999999999991px">详细信息</div>
<div class="tr" style="left:158px;top:696px;width:1364px;height:30px;background:#fff"></div>
<div class="td" style="left:163px;top:702px">4659</div>
<div class="td" style="left:239px;top:702px">D8FAA852-8403-42E9-A9FE-59B5E3D4FD41</div>
<div class="td" style="left:535px;top:702px">88賺-D8FAA852-8403-</div>
<div class="td" style="left:727px;top:702px">会员</div>
<div class="td" style="left:775px;top:702px">0.00元</div>
<div class="td" style="left:831px;top:702px">0.00元</div>
<div class="td" style="left:887px;top:702px">300</div>
<div class="td" style="left:926px;top:702px">2020-06-09 09:14</div>
<div class="td blue" style="left:1018px;top:702px">0人</div>
<div class="td dark" style="left:1066px;top:702px">正常</div>
<div class="btn" style="left:1095.0px;top:701px;width:51.0px">调整团队</div>
<div class="btn" style="left:1149.8px;top:701px;width:65.90000000000009px">线下充值VIP</div>
<div class="btn" style="left:1218.4px;top:701px;width:50.69999999999982px">余额充值</div>
<div class="btn" style="left:1273.0px;top:701px;width:60.299999999999955px">信用分充值</div>
<div class="btn" style="left:1336.0px;top:701px;width:50.700000000000045px">资金明细</div>
<div class="btn" style="left:1390.3px;top:701px;width:60.799999999999955px">信用分明细</div>
<div class="btn" style="left:1453.5px;top:701px;width:51.09999999999991px">详细信息</div>
<div class="hl" style="left:158px;top:141px;width:1364px"></div>
<div class="hl" style="left:158px;top:164px;width:1364px"></div>
<div class="hl" style="left:158px;top:193px;width:1364px"></div>
<div class="hl" style="left:158px;top:223px;width:1364px"></div>
<div class="hl" style="left:158px;top:253px;width:1364px"></div>
<div class="hl" style="left:158px;top:282px;width:1364px"></div>
<div class="hl" style="left:158px;top:312px;width:1364px"></div>
<div class="hl" style="left:158px;top:341px;width:1364px"></div>
<div class="hl" style="left:158px;top:371px;width:1364px"></div>
<div class="hl" style="left:158px;top:400px;width:1364px"></div>
<div class="hl" style="left:158px;top:430px;width:1364px"></div>
<div class="hl" style="left:158px;top:460px;width:1364px"></div>
<div class="hl" style="left:158px;top:489px;width:1364px"></div>
<div class="hl" style="left:158px;top:519px;width:1364px"></div>
<div class="hl" style="left:158px;top:548px;width:1364px"></div>
<div class="hl" style="left:158px;top:578px;width:1364px"></div>
<div class="hl" style="left:158px;top:607px;width:1364px"></div>
<div class="hl" style="left:158px;top:637px;width:1364px"></div>
<div class="hl" style="left:158px;top:667px;width:1364px"></div>
<div class="hl" style="left:158px;top:696px;width:1364px"></div>
<div class="hl" style="left:158px;top:726px;width:1364px"></div>
<div class="vl" style="left:158px;top:141px;height:582px"></div>
<div class="vl" style="left:206px;top:141px;height:582px"></div>
<div class="vl" style="left:234px;top:141px;height:582px"></div>
<div class="vl" style="left:458px;top:141px;height:582px"></div>
<div class="vl" style="left:530px;top:141px;height:582px"></div>
<div class="vl" style="left:649px;top:141px;height:582px"></div>
<div class="vl" style="left:722px;top:141px;height:582px"></div>
<div class="vl" style="left:770px;top:141px;height:582px"></div>
<div class="vl" style="left:826px;top:141px;height:582px"></div>
<div class="vl" style="left:882px;top:141px;height:582px"></div>
<div class="vl" style="left:921px;top:141px;height:582px"></div>
<div class="vl" style="left:1013px;top:141px;height:582px"></div>
<div class="vl" style="left:1061px;top:141px;height:582px"></div>
<div class="vl" style="left:1090px;top:141px;height:582px"></div>
<div class="vl" style="left:1522px;top:141px;height:582px"></div></div>

<!-- v scrollbar -->
<div class="a" style="left:1522px;top:42px;width:14px;height:680.6px;background:#f1f1f1"></div>
<div class="a" style="left:1524px;top:56px;width:10.2px;height:410.7px;background:#c1c1c1"></div>
<svg class="a" style="left:1526px;top:47.5px" width="6" height="4" viewBox="0 0 6 4"><path d="M3 0L6 3.6H0Z" fill="#a3a3a3"/></svg>
<svg class="a" style="left:1526px;top:713.5px" width="6" height="4" viewBox="0 0 6 4"><path d="M0 0H6L3 3.6Z" fill="#505050"/></svg>

<!-- footer -->
<div class="a" style="left:152px;top:814px;width:1384px;height:1px;background:#e5e5e5"></div>
<div class="a" style="left:795.5px;top:824.5px;font-size:10.4px;line-height:13px;color:#4c8fbd;white-space:nowrap"><span style="font-size:11px">©</span> <span style="letter-spacing:0.55px">任务系统 - 源码来自阿奇源码：</span><span style="font-size:11.1px">www.hnymwl.com</span></div>
<div class="a" style="left:1513.2px;top:821px;width:21px;height:20px;background:#555">
  <svg class="a" style="left:6.8px;top:7.6px" width="7.4" height="7.4" viewBox="0 0 7.4 7.4"><path d="M0.6 3.8L3.7 0.9 6.8 3.8M0.6 6.8L3.7 3.9 6.8 6.8" fill="none" stroke="#fff" stroke-width="1.3"/></svg>
</div>
</body></html>
